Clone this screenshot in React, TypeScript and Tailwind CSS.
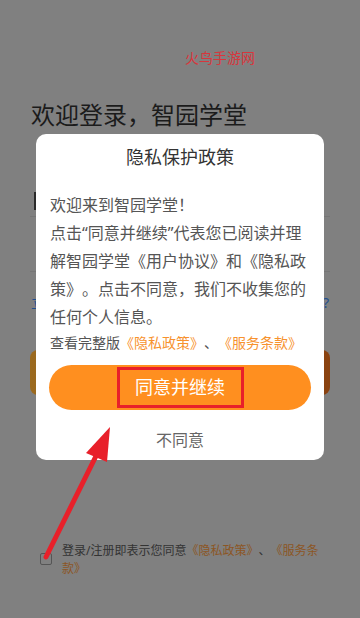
import React from 'react';

const font = "font-['Noto_Sans','Noto_Sans_CJK_SC',sans-serif]";

const PrivacyDialog: React.FC = () => (
  <div className="w-[288px] rounded-[10px] bg-white px-[13px] pt-[11px] pb-[8px]">
    <div className="text-center text-[18px] leading-[24px] text-[#333]">隐私保护政策</div>
    <p className="mt-[22px] pl-[1px] text-[16px] leading-[28px] text-[#555]">
      欢迎来到智园学堂！<br />
      点击“同意并继续”代表您已阅读并理<br />
      解智园学堂《用户协议》和《隐私政<br />
      策》。点击不同意，我们不收集您的<br />
      任何个人信息。
    </p>
    <p className="mt-[2px] pl-[1px] text-[14px] leading-[20px] text-[#555]">
      查看完整版<span className="text-[#f7922e]">《隐私政策》</span>、<span className="text-[#f7922e]">《服务条款》</span>
    </p>
    <button className="mt-[12px] flex h-[45px] w-full items-center justify-center rounded-full bg-[#ff8f1f]">
      <span className="flex h-[41px] w-[127px] items-center justify-center border-[3px] border-[#e8202a] text-[18px] text-white">
        同意并继续
      </span>
    </button>
    <div className="mt-[18px] text-center text-[16px] leading-[24px] text-[#666]">不同意</div>
  </div>
);

export default function App() {
  return (
    <div
      lang="zh-CN"
      className={`relative h-[618px] w-[360px] overflow-hidden bg-[#808080] ${font} [text-spacing-trim:space-all]`}
    >
      {/* page under the mask */}
      <div className="px-[30px] pt-[99px]">
        <h1 className="pl-[1px] text-[24px] leading-[32px] text-[#1b1b1b]">欢迎登录，智园学堂</h1>
        <div className="mt-[49px] flex h-[37px] items-center border-b border-[#767676] pl-[4px]">
          <div className="mt-[6px] h-[18px] w-[3px] bg-[#2a2a2a]" />
        </div>
        <div className="h-[55px] border-b border-[#767676]" />
        <div className="mt-[21px] flex items-center justify-between px-[1px] text-[14px] leading-[20px] text-[#1f4f8f]">
          <span>立即注册</span>
          <span>忘记密码 ?</span>
        </div>
        <div className="mt-[37px] h-[45px] rounded-[8px] bg-gradient-to-r from-[#9b6a1f] to-[#8a4210]" />
        <div className="mt-[147px] flex items-start pl-[10px]">
          <div className="mt-[11px] h-[12px] w-[12px] shrink-0 rounded-[2px] border border-[#555]" />
          <p className="ml-[10px] text-[12px] leading-[18px] text-[#333]">
            登录/注册即表示您同意<span className="text-[#8c5624]">《隐私政策》</span>、<span className="text-[#8c5624]">《服务条</span><br />
            <span className="text-[#8c5624]">款》</span>
          </p>
        </div>
      </div>

      {/* watermark */}
      <div className="absolute left-[185px] top-[49px] text-[14px] leading-[18px] text-[#d8363c]">火鸟手游网</div>

      {/* dialog */}
      <div className="absolute inset-0 flex items-start justify-center pt-[134px]">
        <PrivacyDialog />
      </div>

      {/* annotation arrow */}
      <svg className="pointer-events-none absolute inset-0" width="360" height="618" viewBox="0 0 360 618">
        <line x1="46" y1="557" x2="98" y2="452" stroke="#e8202a" strokeWidth="5" strokeLinecap="round" />
        <polygon points="110,427 86,453 107,462" fill="#e8202a" />
      </svg>
    </div>
  );
}
